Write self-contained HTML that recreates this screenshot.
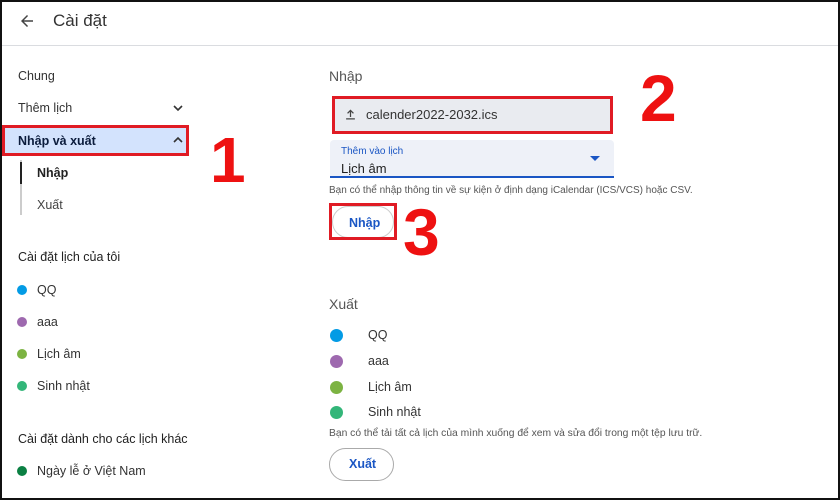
<!DOCTYPE html>
<html><head><meta charset="utf-8"><style>
*{margin:0;padding:0;box-sizing:border-box}
body{width:840px;height:500px;position:relative;background:#fff;font-family:"Liberation Sans",Arial,sans-serif;color:#1f1f1f;overflow:hidden}
.a{position:absolute;white-space:nowrap}
.frame{position:absolute;left:0;top:0;width:840px;height:500px;border:2px solid #111;pointer-events:none}
.t13{font-size:12.5px}
.dot{position:absolute;width:10px;height:10px;border-radius:50%}
.dot2{position:absolute;width:13px;height:13px;border-radius:50%}
.red{color:#ee1111;font-weight:bold;font-family:"Liberation Sans",Arial,sans-serif}
</style></head><body>
<div class="a" style="left:0;top:45px;width:840px;height:1px;background:#dadce0"></div>
<svg class="a" style="left:18px;top:12px" width="18" height="18" viewBox="0 0 24 24"><path d="M20 11H7.8l5.6-5.6L12 4l-8 8 8 8 1.4-1.4L7.8 13H20z" fill="#444"/></svg>
<div class="a" style="left:53px;top:11px;font-size:17px;color:#333">Cài đặt</div>

<div class="a t13" style="left:18px;top:69px;color:#333">Chung</div>
<div class="a t13" style="left:18px;top:101px;color:#333">Thêm lịch</div>
<svg class="a" style="left:172px;top:103px" width="12" height="10" viewBox="0 0 12 10"><path d="M2 3l4 4 4-4" stroke="#333" stroke-width="1.6" fill="none"/></svg>
<div class="a" style="left:2px;top:125px;width:187px;height:31px;background:#d3e3fd;border:3px solid #e01b24"></div>
<div class="a t13" style="left:18px;top:134px;font-weight:bold;color:#0b1c3c">Nhập và xuất</div>
<svg class="a" style="left:172px;top:135px" width="12" height="10" viewBox="0 0 12 10"><path d="M2 7l4-4 4 4" stroke="#333" stroke-width="1.6" fill="none"/></svg>
<div class="a red" style="left:210px;top:120px;font-size:64px;line-height:80px">1</div>
<div class="a" style="left:20px;top:160px;width:2px;height:55px;background:#ccc"></div>
<div class="a" style="left:20px;top:162px;width:2px;height:22px;background:#222"></div>
<div class="a t13" style="left:37px;top:166px;font-weight:bold;color:#222">Nhập</div>
<div class="a t13" style="left:37px;top:198px;color:#444">Xuất</div>

<div class="a t13" style="left:18px;top:250px;color:#222">Cài đặt lịch của tôi</div>
<div class="dot" style="left:17px;top:285px;background:#039be5"></div><div class="a t13" style="left:37px;top:283px;color:#333">QQ</div>
<div class="dot" style="left:17px;top:317px;background:#9e69af"></div><div class="a t13" style="left:37px;top:315px;color:#333">aaa</div>
<div class="dot" style="left:17px;top:349px;background:#7cb342"></div><div class="a t13" style="left:37px;top:347px;color:#333">Lịch âm</div>
<div class="dot" style="left:17px;top:381px;background:#33b679"></div><div class="a t13" style="left:37px;top:379px;color:#333">Sinh nhật</div>
<div class="a t13" style="left:18px;top:432px;color:#222">Cài đặt dành cho các lịch khác</div>
<div class="dot" style="left:17px;top:466px;background:#0b8043"></div><div class="a t13" style="left:37px;top:464px;color:#333">Ngày lễ ở Việt Nam</div>

<div class="a" style="left:329px;top:68px;font-size:14px;color:#555">Nhập</div>
<div class="a" style="left:332px;top:96px;width:281px;height:38px;background:#e9ebf0;border:3px solid #e01b24"></div>
<svg class="a" style="left:343px;top:107px" width="15" height="15" viewBox="0 0 24 24"><path d="M5 18h14v2H5zM11 16V7.8L8 10.8 6.6 9.4 12 4l5.4 5.4-1.4 1.4-3-3V16z" fill="#444"/></svg>
<div class="a" style="left:366px;top:107px;font-size:13px;color:#333">calender2022-2032.ics</div>
<div class="a red" style="left:640px;top:58px;font-size:66px;line-height:80px">2</div>
<div class="a" style="left:330px;top:140px;width:284px;height:38px;background:#eef1f8;border-bottom:2px solid #1a56c4;border-radius:4px 4px 0 0"></div>
<div class="a" style="left:341px;top:146px;font-size:10px;color:#1a56c4">Thêm vào lịch</div>
<div class="a" style="left:341px;top:161px;font-size:13px;color:#222">Lịch âm</div>
<svg class="a" style="left:590px;top:156px" width="10" height="6" viewBox="0 0 10 6"><path d="M0 0h10L5 5z" fill="#1a56c4"/></svg>
<div class="a" style="left:329px;top:185px;font-size:10px;color:#555">Bạn có thể nhập thông tin về sự kiện ở định dạng iCalendar (ICS/VCS) hoặc CSV.</div>
<div class="a" style="left:332px;top:206px;width:62px;height:32px;border:1px solid #ccc;border-radius:16px"></div>
<div class="a" style="left:329px;top:203px;width:68px;height:37px;border:3px solid #e01b24"></div>
<div class="a" style="left:349px;top:216px;font-size:12.5px;color:#1a56c4;font-weight:bold">Nhập</div>
<div class="a red" style="left:403px;top:192px;font-size:66px;line-height:80px">3</div>

<div class="a" style="left:329px;top:296px;font-size:14px;color:#555">Xuất</div>
<div class="dot2" style="left:330px;top:329px;background:#039be5"></div><div class="a t13" style="left:368px;top:328px;color:#333">QQ</div>
<div class="dot2" style="left:330px;top:355px;background:#9e69af"></div><div class="a t13" style="left:368px;top:354px;color:#333">aaa</div>
<div class="dot2" style="left:330px;top:381px;background:#7cb342"></div><div class="a t13" style="left:368px;top:380px;color:#333">Lịch âm</div>
<div class="dot2" style="left:330px;top:406px;background:#33b679"></div><div class="a t13" style="left:368px;top:405px;color:#333">Sinh nhật</div>
<div class="a" style="left:329px;top:428px;font-size:10.3px;color:#555">Bạn có thể tải tất cả lịch của mình xuống để xem và sửa đổi trong một tệp lưu trữ.</div>
<div class="a" style="left:329px;top:448px;width:65px;height:33px;border:1px solid #aaa;border-radius:17px"></div>
<div class="a" style="left:349px;top:457px;font-size:12.5px;color:#1a56c4;font-weight:bold">Xuất</div>
<div class="frame"></div>
</body></html>
